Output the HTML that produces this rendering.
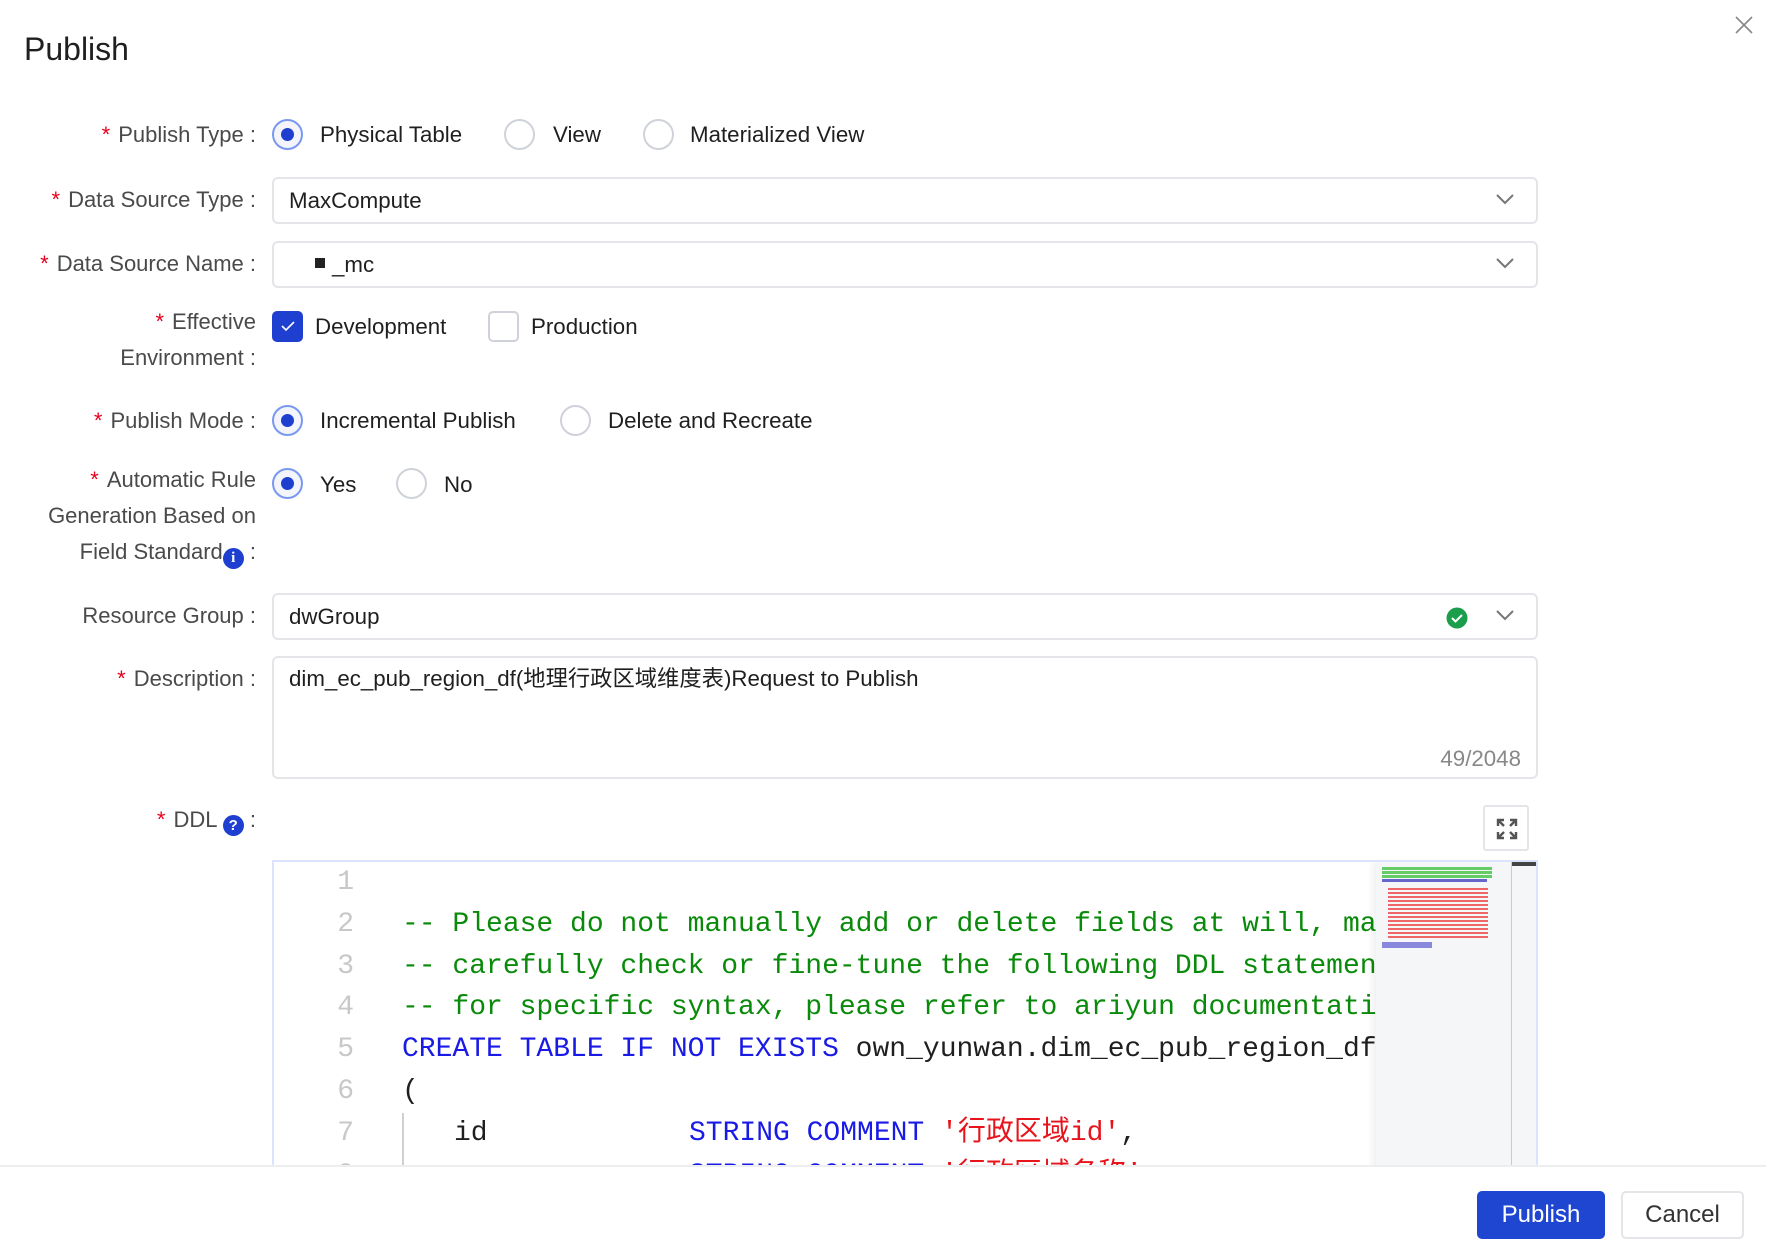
<!DOCTYPE html>
<html><head><meta charset="utf-8"><style>
*{box-sizing:border-box;margin:0;padding:0}
body{width:1766px;height:1254px;background:#fff;font-family:"Liberation Sans","Noto Sans CJK SC",sans-serif;color:#1f1f1f;position:relative;overflow:hidden}
.a{position:absolute;white-space:nowrap}
.title{left:24px;top:31px;font-size:32px;color:#1f1f1f}
.lbl{font-size:22px;color:#4a4a4a;text-align:right;right:1510px;line-height:36px}
.lbl .s{color:#e8001c;margin-right:8px}
.txt{font-size:22.3px;color:#1f1f1f;line-height:30px}
.radio{width:31px;height:31px;border:2px solid #cfd3d9;border-radius:50%;background:#fff}
.radio.on{border-color:#7a98f0;background:#f3f5fb}
.radio.on::after{content:"";position:absolute;left:7px;top:7px;width:13px;height:13px;border-radius:50%;background:#1e3fcf}
.cb{width:31px;height:31px;border:2px solid #cfd3d9;border-radius:5px;background:#fff}
.cb.on{background:#1e3fcf;border-color:#1e3fcf}
.inp{left:272px;width:1266px;height:47px;border:2px solid #e3e5e8;border-radius:6px;background:#fff}
.chev{position:absolute;right:22px;top:14px}
.code{font-family:"Liberation Mono","Noto Sans CJK SC",monospace;font-size:28px;line-height:41.8px}
.g{color:#0a8a0a}.b{color:#1a1ae6}.r{color:#e8141c}
.ln{color:#c8c8c8;width:60px;text-align:right}
</style></head><body>
<div class="a title">Publish</div>
<svg class="a" style="left:1735px;top:16px" width="18" height="18" viewBox="0 0 18 18"><path d="M1 1L17 17M17 1L1 17" stroke="#888" stroke-width="1.6"/></svg>

<div class="a lbl" style="top:117px"><span class="s">*</span>Publish Type :</div>
<div class="a radio on" style="left:272px;top:119px"></div><div class="a txt" style="left:320px;top:120px">Physical Table</div>
<div class="a radio" style="left:504px;top:119px"></div><div class="a txt" style="left:553px;top:120px">View</div>
<div class="a radio" style="left:643px;top:119px"></div><div class="a txt" style="left:690px;top:120px">Materialized View</div>

<div class="a lbl" style="top:182px"><span class="s">*</span>Data Source Type :</div>
<div class="a inp" style="top:177px"><div class="a txt" style="left:15px;top:7px">MaxCompute</div>
<svg class="chev" width="18" height="12" viewBox="0 0 18 12"><path d="M1 2L9 10L17 2" fill="none" stroke="#777" stroke-width="2"/></svg></div>

<div class="a lbl" style="top:246px"><span class="s">*</span>Data Source Name :</div>
<div class="a inp" style="top:241px"><div class="a" style="left:41px;top:15px;width:10px;height:10px;background:#222"></div><div class="a txt" style="left:58px;top:7px">_mc</div>
<svg class="chev" width="18" height="12" viewBox="0 0 18 12"><path d="M1 2L9 10L17 2" fill="none" stroke="#777" stroke-width="2"/></svg></div>

<div class="a lbl" style="top:304px"><span class="s">*</span>Effective</div>
<div class="a lbl" style="top:340px">Environment :</div>
<div class="a cb on" style="left:272px;top:311px"><svg class="a" style="left:7px;top:8px" width="14" height="11" viewBox="0 0 14 11"><path d="M1 5L5 9L13 1" fill="none" stroke="#fff" stroke-width="1.6"/></svg></div>
<div class="a txt" style="left:315px;top:312px">Development</div>
<div class="a cb" style="left:488px;top:311px"></div><div class="a txt" style="left:531px;top:312px">Production</div>

<div class="a lbl" style="top:403px"><span class="s">*</span>Publish Mode :</div>
<div class="a radio on" style="left:272px;top:405px"></div><div class="a txt" style="left:320px;top:406px">Incremental Publish</div>
<div class="a radio" style="left:560px;top:405px"></div><div class="a txt" style="left:608px;top:406px">Delete and Recreate</div>

<div class="a lbl" style="top:462px"><span class="s">*</span>Automatic Rule</div>
<div class="a lbl" style="top:498px">Generation Based on</div>
<div class="a lbl" style="top:534px">Field Standard<span style="display:inline-block;width:21px;height:21px;border-radius:50%;background:#1e3fcf;color:#fff;font-size:15px;line-height:21px;text-align:center;vertical-align:-3px;font-weight:bold;font-family:'Liberation Serif',serif">i</span> :</div>
<div class="a radio on" style="left:272px;top:468px"></div><div class="a txt" style="left:320px;top:470px">Yes</div>
<div class="a radio" style="left:396px;top:468px"></div><div class="a txt" style="left:444px;top:470px">No</div>

<div class="a lbl" style="top:598px">Resource Group :</div>
<div class="a inp" style="top:593px"><div class="a txt" style="left:15px;top:7px">dwGroup</div>
<svg class="a" style="left:1172px;top:12px" width="22" height="22" viewBox="0 0 22 22"><circle cx="11" cy="11" r="10.5" fill="#1a9e4b"/><path d="M6 11L9.5 14.5L16 8" fill="none" stroke="#fff" stroke-width="2"/></svg>
<svg class="chev" width="18" height="12" viewBox="0 0 18 12"><path d="M1 2L9 10L17 2" fill="none" stroke="#777" stroke-width="2"/></svg></div>

<div class="a lbl" style="top:661px"><span class="s">*</span>Description :</div>
<div class="a inp" style="top:656px;height:123px"><div class="a txt" style="left:15px;top:6px">dim_ec_pub_region_df(地理行政区域维度表)Request to Publish</div>
<div class="a txt" style="right:15px;top:86px;color:#888">49/2048</div></div>

<div class="a lbl" style="top:802px"><span class="s">*</span>DDL <span style="display:inline-block;width:21px;height:21px;border-radius:50%;background:#1e3fcf;color:#fff;font-size:15px;line-height:21px;text-align:center;vertical-align:-3px;font-weight:bold">?</span> :</div>
<div class="a" style="left:1483px;top:805px;width:46px;height:46px;border:2px solid #e3e5e8;border-radius:3px;background:#fff">
<svg class="a" style="left:11px;top:11px" width="22" height="22" viewBox="0 0 22 22" fill="none" stroke="#555" stroke-width="2.4"><path d="M2 8V2H8M2 2L8 8M14 2H20V8M20 2L14 8M2 14V20H8M2 20L8 14M20 14V20H14M20 20L14 14"/></svg></div>

<div class="a" style="left:272px;top:860px;width:1266px;height:306px;border:2px solid #dbe4ff;border-bottom:none;overflow:hidden;background:#fff">
 <div class="a code" style="left:0;top:0;width:1104px;height:310px;overflow:hidden">
  <div class="a ln code" style="left:20px;top:0">1</div>
  <div class="a ln code" style="left:20px;top:42px">2</div>
  <div class="a ln code" style="left:20px;top:84px">3</div>
  <div class="a ln code" style="left:20px;top:125px">4</div>
  <div class="a ln code" style="left:20px;top:167px">5</div>
  <div class="a ln code" style="left:20px;top:209px">6</div>
  <div class="a ln code" style="left:20px;top:251px">7</div>
  <div class="a ln code" style="left:20px;top:293px">8</div>
  <div class="a code g" style="left:128px;top:42px">-- Please do not manually add or delete fields at will, make sure</div>
  <div class="a code g" style="left:128px;top:84px">-- carefully check or fine-tune the following DDL statements</div>
  <div class="a code g" style="left:128px;top:125px">-- for specific syntax, please refer to ariyun documentation</div>
  <div class="a code" style="left:128px;top:167px"><span class="b">CREATE TABLE IF NOT EXISTS</span> own_yunwan.dim_ec_pub_region_df</div>
  <div class="a code" style="left:128px;top:209px">(</div>
  <div class="a" style="left:128px;top:251px;width:2px;height:60px;background:#d0d0d0"></div>
  <div class="a code" style="left:180px;top:251px">id</div>
  <div class="a code" style="left:415px;top:251px"><span class="b">STRING COMMENT</span> <span class="r">'行政区域id'</span>,</div>
  <div class="a code" style="left:415px;top:293px"><span class="b">STRING COMMENT</span> <span class="r">'行政区域名称'</span>,</div>
 </div>
 <div class="a" style="left:1102px;top:0;width:135px;height:310px;background:#f5f6f8;box-shadow:-4px 0 6px rgba(0,0,0,0.06)">
  <div class="a" style="left:6px;top:5px;width:110px;height:3px;background:#6c6"></div>
  <div class="a" style="left:6px;top:9px;width:110px;height:3px;background:#6c6"></div>
  <div class="a" style="left:6px;top:13px;width:110px;height:3px;background:#6c6"></div>
  <div class="a" style="left:6px;top:17px;width:105px;height:3px;background:#66c"></div>
  <div class="a" style="left:12px;top:25px;width:100px;height:52px;background:repeating-linear-gradient(#f5f6f8 0 1px,#e66 1px 3px,#f5f6f8 3px 4px)"></div>
  <div class="a" style="left:6px;top:80px;width:50px;height:6px;background:#88d"></div>
 </div>
 <div class="a" style="left:1237px;top:0;width:27px;height:310px;background:#f5f6f8;border-left:1px solid #ccc"><div style="height:4px;background:#444"></div></div>
</div>

<div class="a" style="left:0;top:1165px;width:1766px;height:2px;background:#eceef0"></div>
<div class="a" style="left:1477px;top:1191px;width:128px;height:48px;background:#1e46d0;border-radius:5px;color:#fff;font-size:24px;text-align:center;line-height:48px">Publish</div>
<div class="a" style="left:1621px;top:1191px;width:123px;height:48px;border:2px solid #e3e5e8;border-radius:5px;color:#333;font-size:24px;text-align:center;line-height:44px">Cancel</div>
</body></html>
